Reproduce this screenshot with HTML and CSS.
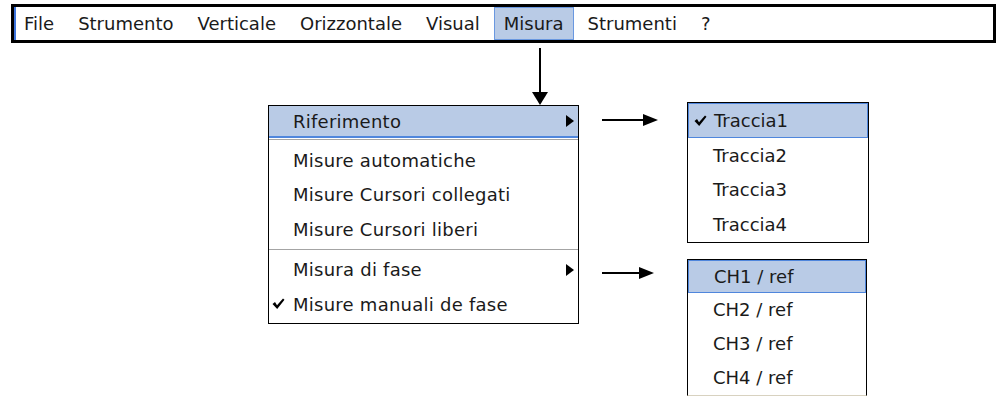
FILE: index.html
```html
<!DOCTYPE html>
<html lang="it">

<head>
    <meta charset="UTF-8">
    <title>Misura</title>
    <link rel="stylesheet" href="styles.css">
</head>

<body>
    <div class="menubar">
        <span class="bar-item">File</span>
        <span class="bar-item">Strumento</span>
        <span class="bar-item">Verticale</span>
        <span class="bar-item">Orizzontale</span>
        <span class="bar-item">Visual</span>
        <span class="bar-item active">Misura</span>
        <span class="bar-item">Strumenti</span>
        <span class="bar-item">?</span>
    </div>

    <div class="diagram">
        <div class="main-col">
            <svg class="arrow-down" width="16" height="57" viewBox="0 0 16 57">
                <line x1="8" y1="0" x2="8" y2="45" stroke="#000" stroke-width="2"/>
                <polygon points="0,44 16,44 8,57" fill="#000"/>
            </svg>
            <div class="menu main-menu">
                <div class="item hot">Riferimento<span class="sub-arrow"></span></div>
                <div class="sep first"></div>
                <div class="item">Misure automatiche</div>
                <div class="item">Misure Cursori collegati</div>
                <div class="item">Misure Cursori liberi</div>
                <div class="sep"></div>
                <div class="item">Misura di fase<span class="sub-arrow"></span></div>
                <div class="item">
                    <svg class="check" width="13" height="12" viewBox="0 0 13 12"><path d="M0.5 6 L3 4 L5 7.2 L11 0.5 L12.5 1.8 L5.2 11 Z" fill="#000"/></svg>
                    Misure manuali de fase
                </div>
            </div>
        </div>

        <div class="link-col">
            <svg class="arrow-right first" width="56" height="12" viewBox="0 0 56 12">
                <line x1="0" y1="6" x2="42" y2="6" stroke="#000" stroke-width="2"/>
                <polygon points="41,0 56,6 41,12" fill="#000"/>
            </svg>
            <svg class="arrow-right second" width="52" height="12" viewBox="0 0 52 12">
                <line x1="0" y1="6" x2="38" y2="6" stroke="#000" stroke-width="2"/>
                <polygon points="37,0 52,6 37,12" fill="#000"/>
            </svg>
        </div>

        <div class="sub-col">
            <div class="menu sub-menu traces">
                <div class="item hot">
                    <svg class="check" width="13" height="12" viewBox="0 0 13 12"><path d="M0.5 6 L3 4 L5 7.2 L11 0.5 L12.5 1.8 L5.2 11 Z" fill="#000"/></svg>
                    Traccia1
                </div>
                <div class="item">Traccia2</div>
                <div class="item">Traccia3</div>
                <div class="item">Traccia4</div>
            </div>
            <div class="menu sub-menu phases">
                <div class="item hot">CH1 / ref</div>
                <div class="item">CH2 / ref</div>
                <div class="item">CH3 / ref</div>
                <div class="item">CH4 / ref</div>
            </div>
        </div>
    </div>
</body>

</html>
```

FILE: styles.css
```css
* {
    padding: 0;
    margin: 0;
    box-sizing: border-box;
}

body {
    background-color: #fff;
    font-family: "DejaVu Sans", Verdana, sans-serif;
    font-size: 18px;
    color: #1a1a1a;
}

.menubar {
    display: flex;
    gap: 4px;
    width: 985px;
    height: 39px;
    margin: 4px 0 0 11px;
    border: 3px solid #000;
    box-shadow: inset 2px 0 0 #3d74dc;
}

.bar-item {
    display: flex;
    align-items: center;
    padding: 0 9px;
    border: 1px solid transparent;
    line-height: 1;
}

.bar-item.active {
    background-color: #b9cbe6;
    border-color: #6a98e0;
}

.diagram {
    display: flex;
    margin-left: 268px;
}

.main-col {
    display: flex;
    flex-direction: column;
    width: 311px;
}

.arrow-down {
    display: block;
    margin: 5px 0 0 264px;
}

.menu {
    border: 1px solid #000;
    background-color: #fff;
}

.main-menu {
    letter-spacing: 0.25px;
    padding-bottom: 1px;
}

.item {
    position: relative;
    display: flex;
    align-items: center;
    height: 35px;
    padding-left: 24px;
    white-space: nowrap;
}

.main-menu .item {
    height: 34.5px;
}

.main-menu .item.hot {
    height: 32px;
    background-color: #b9cbe6;
    border-bottom: 2px solid #4f86dc;
}

.sep {
    height: 4px;
    border-top: 1px solid #a4a4a4;
    margin-top: 2px;
}

.sep.first {
    margin-top: 1px;
}

.sub-arrow {
    position: absolute;
    right: 4px;
    top: 50%;
    margin-top: -6px;
    width: 0;
    height: 0;
    border-top: 6px solid transparent;
    border-bottom: 6px solid transparent;
    border-left: 8px solid #000;
}

.check {
    position: absolute;
    left: 3px;
    top: 50%;
    margin-top: -6px;
}

.link-col {
    display: flex;
    flex-direction: column;
    width: 108px;
}

.arrow-right {
    display: block;
    margin-left: 23px;
}

.arrow-right.first {
    margin-top: 71px;
}

.arrow-right.second {
    margin-top: 141px;
}

.sub-col {
    display: flex;
    flex-direction: column;
    padding-top: 59px;
}

.sub-menu .item {
    padding-left: 25px;
}

.sub-menu .item.hot {
    background-color: #b9cbe6;
    border: 1px solid #4f86dc;
}

.traces {
    width: 182px;
}

.traces .item {
    height: 34.5px;
}

.traces .item.hot {
    height: 35px;
}

.traces .item.hot .check {
    left: 5px;
}

.phases {
    width: 180px;
    margin-top: 16px;
    border-bottom-color: #d8d2c0;
}

.phases .item {
    height: 34px;
}

.phases .item.hot {
    height: 33px;
}
```
